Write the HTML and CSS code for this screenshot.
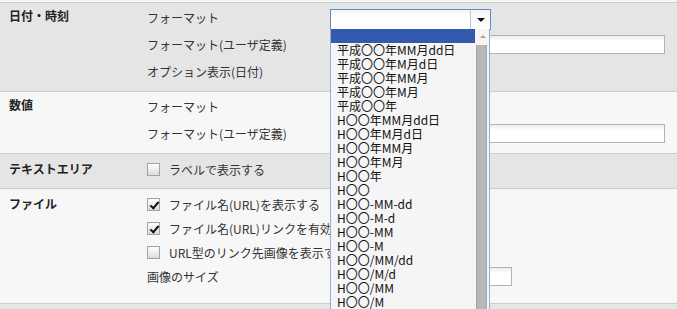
FILE: index.html
```html
<!DOCTYPE html>
<html lang="ja">
<head>
    <meta charset="UTF-8">
    <title>項目設定</title>
    <link rel="stylesheet" href="styles.css">
</head>
<body>
    <div class="form">
        <div class="section dark">
            <div class="heading">日付・時刻</div>
            <div class="fields">
                <div class="row">
                    <span class="label">フォーマット</span>
                    <div class="select">
                        <span class="select-value"></span>
                        <span class="select-btn"></span>
                    </div>
                </div>
                <div class="row">
                    <span class="label">フォーマット(ユーザ定義)</span>
                    <input type="text" class="text wide">
                </div>
                <div class="row">
                    <span class="label">オプション表示(日付)</span>
                </div>
            </div>
        </div>

        <div class="section light">
            <div class="heading">数値</div>
            <div class="fields">
                <div class="row">
                    <span class="label">フォーマット</span>
                </div>
                <div class="row">
                    <span class="label">フォーマット(ユーザ定義)</span>
                    <input type="text" class="text wide">
                </div>
            </div>
        </div>

        <div class="section dark short">
            <div class="heading">テキストエリア</div>
            <div class="fields">
                <div class="row small">
                    <label class="check"><span class="box"></span>ラベルで表示する</label>
                </div>
            </div>
        </div>

        <div class="section light file">
            <div class="heading">ファイル</div>
            <div class="fields">
                <div class="row small">
                    <label class="check"><span class="box checked"></span>ファイル名(URL)を表示する</label>
                </div>
                <div class="row small">
                    <label class="check"><span class="box checked"></span>ファイル名(URL)リンクを有効にする</label>
                </div>
                <div class="row small">
                    <label class="check"><span class="box"></span>URL型のリンク先画像を表示する</label>
                </div>
                <div class="row small">
                    <span class="label">画像のサイズ</span>
                    <input type="text" class="text narrow">
                </div>
            </div>
        </div>

        <div class="section dark"></div>
    </div>

    <!-- open list of the format select -->
    <div class="dropdown">
        <ul class="options">
            <li class="selected"></li>
            <li>平成〇〇年MM月dd日</li>
            <li>平成〇〇年M月d日</li>
            <li>平成〇〇年MM月</li>
            <li>平成〇〇年M月</li>
            <li>平成〇〇年</li>
            <li>H〇〇年MM月dd日</li>
            <li>H〇〇年M月d日</li>
            <li>H〇〇年MM月</li>
            <li>H〇〇年M月</li>
            <li>H〇〇年</li>
            <li>H〇〇</li>
            <li>H〇〇-MM-dd</li>
            <li>H〇〇-M-d</li>
            <li>H〇〇-MM</li>
            <li>H〇〇-M</li>
            <li>H〇〇/MM/dd</li>
            <li>H〇〇/M/d</li>
            <li>H〇〇/MM</li>
            <li>H〇〇/M</li>
        </ul>
        <div class="scrollbar">
            <span class="scroll-up"></span>
            <span class="thumb"></span>
        </div>
    </div>
</body>
</html>
```

FILE: styles.css
```css
body {
    margin: 0;
    background: #f7f7f7;
    font-family: "Noto Sans CJK JP", "DejaVu Sans", sans-serif;
    font-size: 12px;
    color: #333;
}
.form {
    margin-top: 2px;
    width: 677px;
}
.section {
    display: flex;
    border-top: 1px solid #cdcdcd;
    padding: 1px 0 6px;
}
.section.dark {
    background: #e5e5e5;
}
.section.light {
    background: #f7f7f7;
}
.section.short {
    padding: 3px 0 7px;
}
.section.file {
    padding: 3px 0 15px;
}
.heading {
    width: 138px;
    padding-left: 9px;
    font-weight: bold;
    line-height: 24px;
    color: #222;
}
.fields {
    flex: 1;
}
.row {
    display: flex;
    align-items: center;
    height: 27px;
}
.row.small {
    height: 24px;
}
.label {
    width: 183px;
    flex-shrink: 0;
}
.select {
    display: flex;
    width: 159px;
    height: 19px;
    margin-top: 3px;
    border: 1px solid #5d8dc9;
    background: #fff;
}
.select-value {
    flex: 1;
    background: linear-gradient(#f3f3f3, #fff 6px);
}
.select-btn {
    width: 19px;
    border-left: 1px solid #b9c6d6;
    background: linear-gradient(#f5f5f5, #fff);
    position: relative;
}
.select-btn::after {
    content: "";
    position: absolute;
    left: 6px;
    top: 8px;
    border-left: 4px solid transparent;
    border-right: 4px solid transparent;
    border-top: 4px solid #111;
}
.text {
    height: 17px;
    border: 1px solid #b3b3b3;
    background: linear-gradient(#ececec, #fff 5px);
    padding: 0 3px;
    box-sizing: content-box;
    margin: 0;
    font: inherit;
}
.text.wide {
    width: 327px;
}
.text.narrow {
    width: 174px;
}
.check {
    display: flex;
    align-items: center;
    gap: 9px;
}
.box {
    width: 13px;
    height: 13px;
    border: 1px solid #a3a3a3;
    background: linear-gradient(#fff, #dcdcdc);
    box-sizing: border-box;
    position: relative;
}
.box.checked::after {
    content: "";
    position: absolute;
    left: 4px;
    top: 1px;
    width: 3px;
    height: 7px;
    border-right: 2px solid #111;
    border-bottom: 2px solid #111;
    transform: rotate(40deg);
}
.dropdown {
    position: absolute;
    left: 330px;
    top: 29px;
    width: 158px;
    height: 290px;
    display: flex;
    border: 1px solid #8db0dc;
    border-top: none;
    background: #f5f5f5;
    overflow: hidden;
}
.options {
    list-style: none;
    margin: 0;
    padding: 0;
    flex: 1;
    font-size: 12px;
    line-height: 14px;
    color: #111;
}
.options li {
    height: 14px;
    padding-left: 6px;
    white-space: nowrap;
}
.options li.selected {
    background: #3559ae;
}
.scrollbar {
    width: 14px;
    position: relative;
    background: #f5f5f5;
}
.scroll-up {
    position: absolute;
    left: 5px;
    top: 6px;
    border-left: 3px solid transparent;
    border-right: 3px solid transparent;
    border-bottom: 3px solid #c49a78;
}
.thumb {
    position: absolute;
    left: 1px;
    top: 16px;
    bottom: 0;
    width: 11px;
    background: #b7b7b7;
    border-left: 1px solid #a4a4a4;
    border-right: 1px solid #a9a9a9;
    box-sizing: border-box;
}
```
